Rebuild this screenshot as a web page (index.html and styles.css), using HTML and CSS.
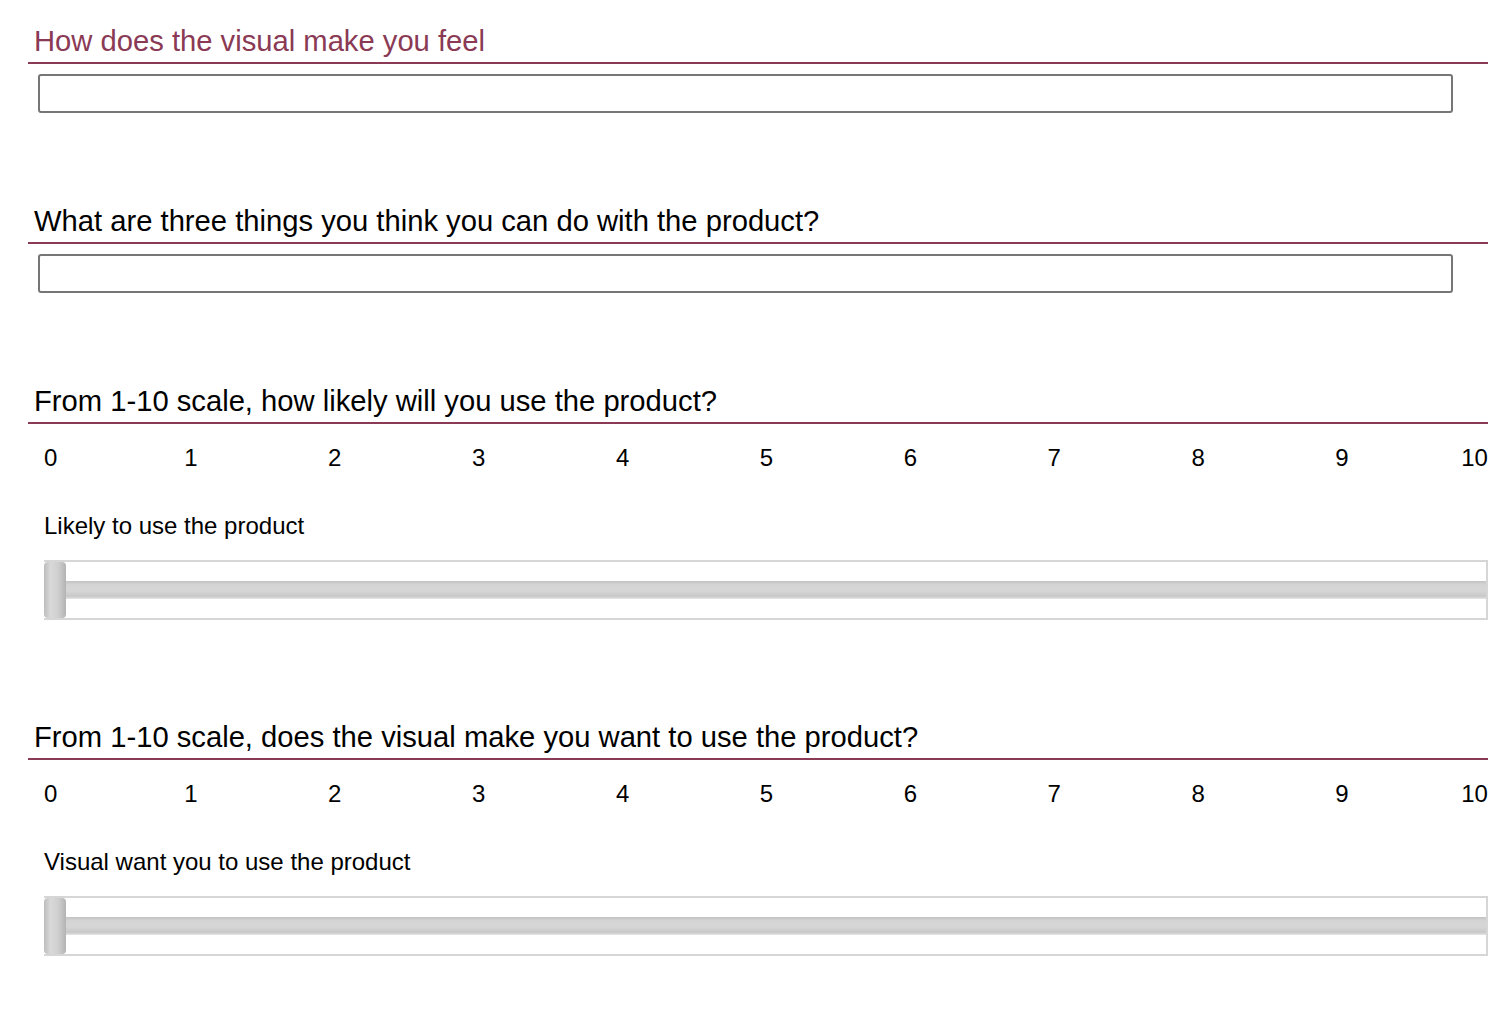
FILE: index.html
```html
<!DOCTYPE html>
<html lang="en">
<head>
<meta charset="utf-8">
<title>Survey</title>
<link rel="stylesheet" href="styles.css">
</head>
<body>
<main class="form">
  <section class="q q-text">
    <h2 class="q-title accent">How does the visual make you feel</h2>
    <input class="text-input" type="text" aria-label="How does the visual make you feel">
  </section>

  <section class="q q-text">
    <h2 class="q-title">What are three things you think you can do with the product?</h2>
    <input class="text-input" type="text" aria-label="What are three things you think you can do with the product?">
  </section>

  <section class="q q-scale">
    <h2 class="q-title">From 1-10 scale, how likely will you use the product?</h2>
    <div class="scale">
      <span class="tick first"><span>0</span></span>
      <span class="tick"><span>1</span></span>
      <span class="tick"><span>2</span></span>
      <span class="tick"><span>3</span></span>
      <span class="tick"><span>4</span></span>
      <span class="tick"><span>5</span></span>
      <span class="tick"><span>6</span></span>
      <span class="tick"><span>7</span></span>
      <span class="tick"><span>8</span></span>
      <span class="tick"><span>9</span></span>
      <span class="tick last"><span>10</span></span>
    </div>
    <div class="slider-label">Likely to use the product</div>
    <div class="slider" role="slider" aria-valuemin="0" aria-valuemax="10" aria-valuenow="0">
      <div class="thumb"></div>
      <div class="track"></div>
    </div>
  </section>

  <section class="q q-scale">
    <h2 class="q-title">From 1-10 scale, does the visual make you want to use the product?</h2>
    <div class="scale">
      <span class="tick first"><span>0</span></span>
      <span class="tick"><span>1</span></span>
      <span class="tick"><span>2</span></span>
      <span class="tick"><span>3</span></span>
      <span class="tick"><span>4</span></span>
      <span class="tick"><span>5</span></span>
      <span class="tick"><span>6</span></span>
      <span class="tick"><span>7</span></span>
      <span class="tick"><span>8</span></span>
      <span class="tick"><span>9</span></span>
      <span class="tick last"><span>10</span></span>
    </div>
    <div class="slider-label">Visual want you to use the product</div>
    <div class="slider" role="slider" aria-valuemin="0" aria-valuemax="10" aria-valuenow="0">
      <div class="thumb"></div>
      <div class="track"></div>
    </div>
  </section>
</main>
</body>
</html>
```

FILE: styles.css
```css
html, body {
  margin: 0;
  padding: 0;
  background: #ffffff;
}

body {
  font-family: "Liberation Sans", Arial, Helvetica, sans-serif;
  color: #000000;
}

.form {
  width: 1460px;
  margin-left: 28px;
  padding-top: 21px;
  display: flex;
  flex-direction: column;
}

.q-title {
  margin: 0;
  font-size: 29.2px;
  font-weight: normal;
  line-height: 33px;
  padding: 4px 0 4px 6px;
  border-bottom: 2px solid #8a3a54;
  color: #000000;
}

.q-title.accent {
  color: #8a3a54;
}

.q-text {
  padding-bottom: 88px;
}

.text-input {
  display: block;
  box-sizing: border-box;
  margin: 10px 0 0 10px;
  width: 1415px;
  height: 39px;
  border: 2px solid #767676;
  border-radius: 3px;
  background: #ffffff;
  padding: 0 6px;
  font-family: inherit;
  font-size: 16px;
  outline: none;
}

.q-scale {
  padding-bottom: 97px;
}

.scale {
  margin: 20px 0 0 19px;
  width: 1439px;
  display: flex;
  justify-content: space-between;
  font-size: 24px;
  line-height: 28px;
  height: 28px;
}

.tick {
  width: 0;
  display: flex;
  justify-content: center;
  white-space: nowrap;
}

.tick.first {
  justify-content: flex-start;
}

.tick.first span {
  margin-left: -3px;
}

.tick.last {
  justify-content: flex-end;
}

.tick.last span {
  margin-right: -2px;
}

.slider-label {
  margin: 40px 0 0 16px;
  font-size: 24px;
  line-height: 28px;
}

.slider {
  margin: 20px 0 0 16px;
  box-sizing: border-box;
  height: 60px;
  border: 2px solid #d6d6d6;
  border-left: none;
  display: flex;
  align-items: stretch;
  background: #ffffff;
}

.thumb {
  width: 22px;
  flex: none;
  border-radius: 4px;
  background: linear-gradient(to right, #bdbdbd 0%, #d9d9d9 30%, #cfcfcf 65%, #b3b3b3 100%);
}

.track {
  flex: 1;
  align-self: center;
  height: 18px;
  margin-top: -1px;
  background: linear-gradient(to bottom, #c2c2c2 0%, #d4d4d4 20%, #d6d6d6 55%, #c8c8c8 85%, #e6e6e6 100%);
}
```
